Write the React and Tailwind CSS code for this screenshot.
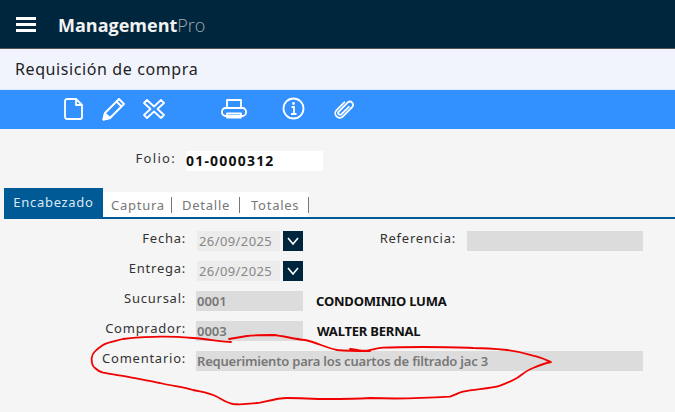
import React from "react";

const labelClass = "text-[13px] leading-[14px] text-[#333] text-right tracking-[0.75px]";
const inputClass = "h-5 bg-[#dcdcdc] text-[13px] leading-5 text-[#777] px-[1px] font-semibold";
const dateClass = "h-5 bg-[#ececec] text-[13px] leading-5 text-[#888] pl-[2px] tracking-[0.4px]";
const nameClass = "text-[13px] leading-5 font-bold text-[#111] tracking-[-0.2px]";

function Chevron() {
  return (
    <div className="w-5 h-5 bg-[#00263e] flex items-center justify-center">
      <svg width="14" height="10" viewBox="0 0 14 10" fill="none" stroke="white" strokeWidth="1.6">
        <path d="M2 2l5 6 5-6" />
      </svg>
    </div>
  );
}

function Toolbar() {
  return (
    <div className="h-10 bg-[#3390ff] border-t border-[#d8e8ff] flex items-center pl-[64px] pb-[2px]">
      {/* archivo */}
      <svg width="20" height="24" viewBox="0 0 20 24" fill="none" stroke="white" strokeWidth="1.8" strokeLinejoin="round">
        <path d="M3 2h9l6 6v12a2 2 0 0 1-2 2H3a2 2 0 0 1-2-2V4a2 2 0 0 1 2-2z" />
        <path d="M12 2v6h6" />
      </svg>
      {/* lapiz */}
      <svg className="ml-[18px]" width="24" height="24" viewBox="0 0 24 24" fill="none" stroke="white" strokeWidth="2" strokeLinejoin="round">
        <path d="M17 2l5 5L8 21l-6.5 1.5L3 16z" />
        <path d="M14.5 4.5l5 5" />
        <path d="M1.5 22.5L3 16.5l5 4.5z" fill="white" />
      </svg>
      {/* cancelar */}
      <svg className="ml-[17px]" width="22" height="22" viewBox="0 0 22 22" fill="none" stroke="white" strokeWidth="1.8" strokeLinejoin="round">
        <path d="M4 2l7 6.5L18 2l3 3-6.5 6 6.5 6-3 3-7-6.5L4 20l-3-3 6.5-6L1 5z" />
      </svg>
      {/* imprimir */}
      <svg className="ml-[56px]" width="26" height="22" viewBox="0 0 26 22" fill="none" stroke="white" strokeWidth="1.8" strokeLinejoin="round">
        <path d="M6 10V2h14v8" />
        <rect x="1" y="10" width="24" height="8" rx="3.5" />
        <path d="M6 15.5h14v4H6z" />
      </svg>
      {/* info */}
      <svg className="ml-[35px]" width="23" height="23" viewBox="0 0 23 23" fill="none" stroke="white" strokeWidth="1.8">
        <circle cx="11.5" cy="11.5" r="10" />
        <circle cx="11.5" cy="6.5" r="1.4" fill="white" stroke="none" />
        <path d="M9.5 10h2.5v6.5M9 17h5.5" />
      </svg>
      {/* clip */}
      <svg className="ml-[27px]" width="24" height="24" viewBox="0 0 24 24" fill="none" stroke="white" strokeWidth="1.8" strokeLinecap="round" strokeLinejoin="round">
        <g transform="rotate(45 12 12)">
          <path d="M7.5 7v11a4.5 4.5 0 0 0 9 0V5a3.2 3.2 0 0 0-6.4 0v12.5a1.9 1.9 0 0 0 3.8 0V7" />
        </g>
      </svg>
    </div>
  );
}

function Tabs() {
  return (
    <div className="mt-[18px] ml-1 flex items-end border-b-2 border-[#005a96] h-[30px]">
      <div className="w-[99px] h-[29px] bg-[#005a96] text-[#dce8f2] text-[13px] leading-[29px] text-center tracking-[0.7px]">
        Encabezado
      </div>
      <div className="bg-white h-[25px] flex items-center text-[13px] text-[#777] tracking-[0.75px]">
        <span className="w-[69px] h-4 leading-4 pl-2 border-r border-[#777]">Captura</span>
        <span className="w-[68px] h-4 leading-4 pl-[10px] border-r border-[#777]">Detalle</span>
        <span className="w-[69px] h-4 leading-4 pl-[11px] border-r border-[#777]">Totales</span>
      </div>
    </div>
  );
}

function Annotation() {
  return (
    <svg className="absolute left-0 top-0 pointer-events-none" width="675" height="412" fill="none" stroke="#f00000" strokeWidth="1.8" strokeLinecap="round" strokeLinejoin="round">
      <path d="M231 342C224 342 207 339 193 338C180 337 170 336.5 160 336.7C148 337 134 337 123 339C115 341 108 342 103 345C96 350 92 353 91.7 358C91.5 362 92 366 95 368C98 371 100 372 103 372.7C110 374 118 375 127 376.7C138 379 150 381 160 383C172 386 183 387 193 390C202 392 210 393 217 396.7C223 400 227 403 233 404C242 405 250 404 260 402.7C268 401 278 398 287 398C300 398 313 399 327 399C342 399 355 399 370 398C395 399 420 398.5 450 396.7C455 395 458 393 463 391.7C475 389 490 389 500 385.7C507 383 512 381 517 378C523 374 527 370 533 368C538 366 546 363 551 362C546 360 540 357 533 355.7C525 353 516 351 507 350C497 349 485 348 473 348C457 347 440 347 423 347C410 347 396 347 383 347.7C377 348 372 350 367 350.7C360 351 355 349 350 349" />
      <path d="M370 351C358 351 347 351 337 350C326 348 316 342 305 340C294 339 284 336 273 335C263 335 255 335 247 336C241 337 235 338 229 339" />
    </svg>
  );
}

export default function App() {
  return (
    <div className="relative w-[675px] h-[412px] overflow-hidden bg-[#f5f5f5]" style={{ fontFamily: "'Noto Sans', sans-serif" }}>
      {/* barra superior */}
      <div className="h-[49px] bg-[#00263e] border-b border-[#555] flex items-center pl-4 pt-[2px]">
        <div className="w-5 flex flex-col gap-[3px] -mt-[2px]">
          <div className="h-[3px] bg-white" />
          <div className="h-[3px] bg-white" />
          <div className="h-[3px] bg-white" />
        </div>
        <div className="ml-[22px] text-[18px] leading-6 font-bold text-[#f2f2f2]" style={{ fontFamily: "'Open Sans', sans-serif" }}>
          Management<span className="font-light text-[#a0abb3]">Pro</span>
        </div>
      </div>

      <div className="h-10 bg-[#f1f4fd] flex items-center pl-[15px] text-[16px] text-[#222] tracking-[0.6px]">
        Requisición de compra
      </div>

      <Toolbar />

      {/* folio */}
      <div className="mt-[22px] flex items-start">
        <div className="w-[176px] text-[13px] leading-[14px] text-[#333] text-right tracking-[1.3px]">Folio:</div>
        <div className="ml-[10px] w-[137px] h-5 bg-white text-[14px] leading-5 font-bold text-[#111] tracking-[1.2px]">01-0000312</div>
      </div>

      <Tabs />

      {/* campos */}
      <div className="mt-[12px] flex flex-col gap-[10px]">
        <div className="flex items-start h-5">
          <div className={`w-[186px] ${labelClass}`}>Fecha:</div>
          <div className={`ml-[11px] w-[83px] ${dateClass}`}>26/09/2025</div>
          <div className="ml-[3px]"><Chevron /></div>
          <div className={`w-[153px] ${labelClass}`}>Referencia:</div>
          <div className={`ml-[11px] w-[176px] ${inputClass}`} />
        </div>
        <div className="flex items-start h-5">
          <div className={`w-[186px] ${labelClass}`}>Entrega:</div>
          <div className={`ml-[11px] w-[83px] ${dateClass}`}>26/09/2025</div>
          <div className="ml-[3px]"><Chevron /></div>
        </div>
        <div className="flex items-start h-5">
          <div className={`w-[186px] ${labelClass}`}>Sucursal:</div>
          <div className={`ml-[10px] w-[107px] ${inputClass}`}>0001</div>
          <div className={`ml-[13px] ${nameClass}`}>CONDOMINIO LUMA</div>
        </div>
        <div className="flex items-start h-5">
          <div className={`w-[186px] ${labelClass}`}>Comprador:</div>
          <div className={`ml-[10px] w-[107px] ${inputClass}`}>0003</div>
          <div className={`ml-[14px] ${nameClass}`}>WALTER BERNAL</div>
        </div>
        <div className="flex items-start h-5">
          <div className={`w-[186px] ${labelClass}`}>Comentario:</div>
          <div className={`ml-[10px] w-[447px] ${inputClass} tracking-[-0.2px]`}>Requerimiento para los cuartos de filtrado jac 3</div>
        </div>
      </div>

      <Annotation />
    </div>
  );
}
